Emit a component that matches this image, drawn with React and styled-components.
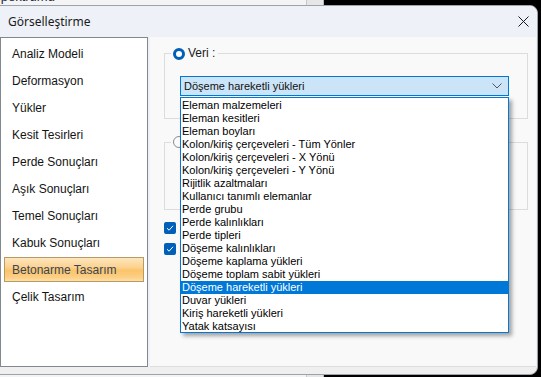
import styled, { createGlobalStyle } from 'styled-components';

const GlobalStyle = createGlobalStyle`
  html, body {
    margin: 0;
    padding: 0;
    background: #000;
    overflow: hidden;
  }
  body {
    width: 541px;
    height: 377px;
    font-family: "Liberation Sans", Arial, sans-serif;
  }
`;

const Desktop = styled.div`
  position: relative;
  width: 541px;
  height: 377px;
  overflow: hidden;
  background: #000;
`;

const BackWindow = styled.div`
  position: absolute;
  left: -20px;
  top: -10px;
  width: 344px;
  height: 400px;
  background: #f4f4f4;
  display: flex;
`;

const BackText = styled.div`
  flex: 1;
  padding: 0 0 0 12px;
  font-size: 13px;
  line-height: 14px;
  color: #1d2a4a;
`;

const BackScroll = styled.div`
  width: 16px;
  background: #e6e6e6;
  border-left: 1px solid #c9c9c9;
  border-right: 1px solid #b8b8b8;
`;

const Dialog = styled.div`
  position: absolute;
  left: -10px;
  top: 5px;
  width: 548px;
  height: 370px;
  display: flex;
  flex-direction: column;
  background: #efefef;
  border: 1px solid #9da3ab;
  border-radius: 8px;
  overflow: hidden;
  box-sizing: border-box;
`;

const TitleBar = styled.div`
  height: 30px;
  flex: none;
  display: flex;
  align-items: center;
  justify-content: space-between;
  padding: 0 8px 0 17px;
  background: #eef1f8;
  font-family: "Noto Sans", "Open Sans", sans-serif;
  font-size: 12px;
  color: #1a1a1a;
`;

const CloseButton = styled.div`
  width: 12px;
  height: 12px;
  display: flex;
  align-items: center;
  justify-content: center;
`;

const Body = styled.div`
  height: 330px;
  flex: none;
  display: flex;
  gap: 2px;
  padding: 1px 1px 0 9px;
  background: #eef1f8;
`;

const SideList = styled.div`
  width: 148px;
  border: 1px solid #828790;
  background: #fff;
  padding: 3px 3px 0;
  box-sizing: border-box;
  display: flex;
  flex-direction: column;
  gap: 2px;
`;

const SideItem = styled.div`
  height: 25px;
  flex: none;
  padding-left: 7px;
  display: flex;
  align-items: center;
  box-sizing: border-box;
  font-size: 12px;
  color: ${p => (p.$active ? '#37455c' : '#141414')};
  border: 1px solid ${p => (p.$active ? '#b79a66' : 'transparent')};
  background: ${p =>
    p.$active
      ? 'linear-gradient(to bottom, #fde6bd 0%, #fcd290 40%, #fbc467 55%, #fcd089 85%, #fde1a6 100%)'
      : 'transparent'};
`;

const Panel = styled.div`
  position: relative;
  flex: 1;
  background: #f9f9f9;
  border-bottom: 1px solid #dedede;
  padding: 16px 8px 0 14px;
  display: flex;
  flex-direction: column;
`;

const GroupBox = styled.div`
  position: relative;
  flex: none;
  height: ${p => p.$h}px;
  margin-bottom: ${p => p.$mb || 0}px;
  border: 1px solid #dcdcdc;
  box-sizing: border-box;
  padding: 22px 0 0 15px;
`;

const Legend = styled.div`
  position: absolute;
  left: 6px;
  top: -7px;
  display: flex;
  align-items: center;
  gap: 3px;
  padding: 0 3px 0 2px;
  background: #f9f9f9;
  font-size: 12px;
  color: #1a1a1a;
  line-height: 13px;
`;

const Radio = styled.span`
  width: 12px;
  height: 12px;
  border-radius: 50%;
  box-sizing: border-box;
  background: ${p => (p.$on ? '#fff' : '#fbfbfb')};
  border: ${p => (p.$on ? '3.5px solid #005fb8' : '1px solid #8a8a8a')};
`;

const Combo = styled.div`
  width: 329px;
  height: 20px;
  box-sizing: border-box;
  border: 1px solid #0078d4;
  background: #cce4f7;
  display: flex;
  align-items: center;
  justify-content: space-between;
  padding: 0 6px 0 3px;
  font-size: 11px;
  color: #111;
`;

const CheckRow = styled.div`
  display: flex;
  align-items: center;
  height: 21px;
`;

const CheckBox = styled.span`
  width: 12px;
  height: 12px;
  border-radius: 2px;
  background: #005fb8;
  display: flex;
  align-items: center;
  justify-content: center;
`;

const DropList = styled.div`
  position: absolute;
  left: 30px;
  top: 60px;
  width: 329px;
  height: 236px;
  box-sizing: border-box;
  border: 1px solid #0078d7;
  background: #fff;
  box-shadow: 3px 3px 4px rgba(0, 0, 0, 0.35);
  padding-top: 1px;
`;

const DropItem = styled.div`
  height: 13px;
  line-height: 13px;
  padding-left: 1px;
  font-size: 11px;
  white-space: nowrap;
  color: ${p => (p.$sel ? '#fff' : '#000')};
  background: ${p => (p.$sel ? '#0078d7' : 'transparent')};
`;

const sections = [
  'Analiz Modeli',
  'Deformasyon',
  'Yükler',
  'Kesit Tesirleri',
  'Perde Sonuçları',
  'Aşık Sonuçları',
  'Temel Sonuçları',
  'Kabuk Sonuçları',
  'Betonarme Tasarım',
  'Çelik Tasarım',
];

const options = [
  'Eleman malzemeleri',
  'Eleman kesitleri',
  'Eleman boyları',
  'Kolon/kiriş çerçeveleri - Tüm Yönler',
  'Kolon/kiriş çerçeveleri - X Yönü',
  'Kolon/kiriş çerçeveleri - Y Yönü',
  'Rijitlik azaltmaları',
  'Kullanıcı tanımlı elemanlar',
  'Perde grubu',
  'Perde kalınlıkları',
  'Perde tipleri',
  'Döşeme kalınlıkları',
  'Döşeme kaplama yükleri',
  'Döşeme toplam sabit yükleri',
  'Döşeme hareketli yükleri',
  'Duvar yükleri',
  'Kiriş hareketli yükleri',
  'Yatak katsayısı',
];

const selected = 'Döşeme hareketli yükleri';

const Check = () => (
  <svg width="8" height="8" viewBox="0 0 8 8">
    <path d="M1 4.2 L3.1 6.2 L7 1.8" fill="none" stroke="#fff" strokeWidth="1" />
  </svg>
);

export default function App() {
  return (
    <Desktop>
      <GlobalStyle />
      <BackWindow>
        <BackText>Spektrumu</BackText>
        <BackScroll />
      </BackWindow>
      <Dialog>
        <TitleBar>
          <span>Görselleştirme</span>
          <CloseButton>
            <svg width="11" height="11" viewBox="0 0 11 11">
              <path d="M0.5 0.5 L10.5 10.5 M10.5 0.5 L0.5 10.5" stroke="#1a1a1a" strokeWidth="1" />
            </svg>
          </CloseButton>
        </TitleBar>
        <Body>
          <SideList>
            {sections.map(s => (
              <SideItem key={s} $active={s === 'Betonarme Tasarım'}>
                {s}
              </SideItem>
            ))}
          </SideList>
          <Panel>
            <GroupBox $h={66} $mb={23}>
              <Legend>
                <Radio $on />
                Veri :
              </Legend>
              <Combo>
                <span>{selected}</span>
                <svg width="10" height="6" viewBox="0 0 10 6">
                  <path d="M0.5 0.5 L5 5 L9.5 0.5" fill="none" stroke="#555" strokeWidth="1" />
                </svg>
              </Combo>
            </GroupBox>
            <GroupBox $h={68} $mb={7}>
              <Legend>
                <Radio />
              </Legend>
            </GroupBox>
            <CheckRow>
              <CheckBox>
                <Check />
              </CheckBox>
            </CheckRow>
            <CheckRow>
              <CheckBox>
                <Check />
              </CheckBox>
            </CheckRow>
            <DropList>
              {options.map(o => (
                <DropItem key={o} $sel={o === selected}>
                  {o}
                </DropItem>
              ))}
            </DropList>
          </Panel>
        </Body>
      </Dialog>
    </Desktop>
  );
}
